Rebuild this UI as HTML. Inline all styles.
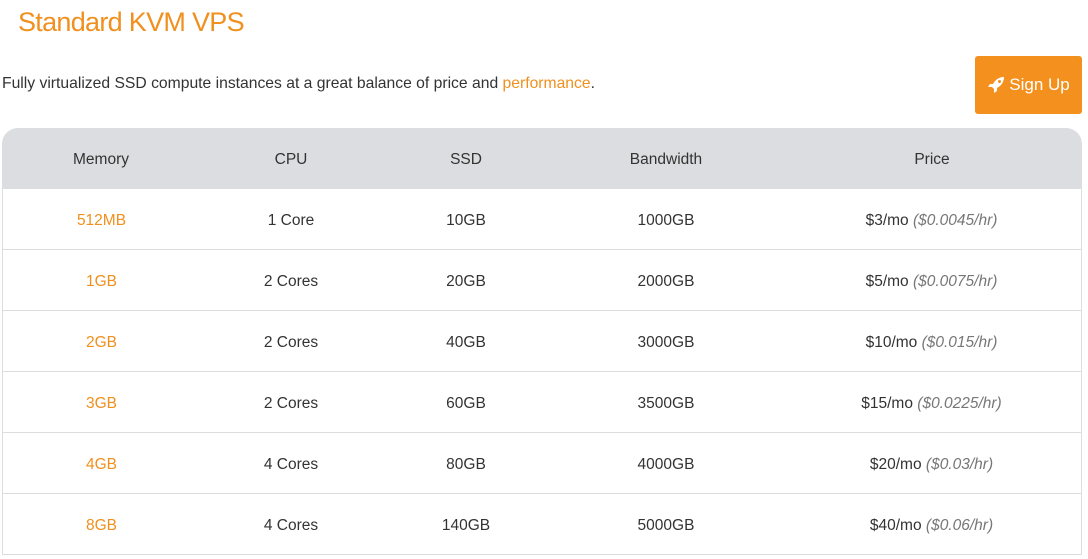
<!DOCTYPE html>
<html><head><meta charset="utf-8"><style>
body{margin:0;width:1088px;height:559px;background:#fff;font-family:"Liberation Sans",sans-serif;color:#333;position:relative;overflow:hidden}
h1{position:absolute;left:18px;top:7px;margin:0;font-weight:normal;font-size:27px;color:#f0901e;letter-spacing:-0.7px}
p{position:absolute;left:2px;top:75px;margin:0;font-size:15.7px;color:#333}
p span{color:#f0901e}
.btn{position:absolute;left:975px;top:56px;width:107px;height:58px;background:#f4901e;border-radius:3px;color:#fff;font-size:17px;display:flex;align-items:center;justify-content:center;gap:4px}
table{position:absolute;left:2px;top:128px;width:1080px;table-layout:fixed;border-collapse:separate;border-spacing:0;font-size:15.5px}
th{background:#dcdde0;height:58px;padding:3px 0 0;font-weight:normal;color:#333}
th:first-child{border-top-left-radius:16px}
th:last-child{border-top-right-radius:16px}
td{height:57px;padding:3px 0 0;text-align:center;border-bottom:1px solid #ddd}
td:first-child{border-left:1px solid #ddd;color:#f0901e}
td:last-child{border-right:1px solid #ddd}
i{color:#777}
</style></head><body>
<h1>Standard KVM VPS</h1>
<p>Fully virtualized SSD compute instances at a great balance of price and <span>performance</span>.</p>
<div class="btn"><svg width="18" height="18" viewBox="0 0 18 18"><path d="M17 1C12 1 8 4 6 8L3 8 1 11 5 11 7 13 7 17 10 15 10 12C14 10 17 6 17 1Z" fill="#fff"/><circle cx="12.5" cy="5.5" r="1.5" fill="#f4901e"/></svg>Sign Up</div>
<table>
<colgroup><col style="width:198px"><col style="width:182px"><col style="width:168px"><col style="width:232px"><col style="width:300px"></colgroup>
<tr><th>Memory</th><th>CPU</th><th>SSD</th><th>Bandwidth</th><th>Price</th></tr>
<tr><td>512MB</td><td>1 Core</td><td>10GB</td><td>1000GB</td><td>$3/mo <i>($0.0045/hr)</i></td></tr>
<tr><td>1GB</td><td>2 Cores</td><td>20GB</td><td>2000GB</td><td>$5/mo <i>($0.0075/hr)</i></td></tr>
<tr><td>2GB</td><td>2 Cores</td><td>40GB</td><td>3000GB</td><td>$10/mo <i>($0.015/hr)</i></td></tr>
<tr><td>3GB</td><td>2 Cores</td><td>60GB</td><td>3500GB</td><td>$15/mo <i>($0.0225/hr)</i></td></tr>
<tr><td>4GB</td><td>4 Cores</td><td>80GB</td><td>4000GB</td><td>$20/mo <i>($0.03/hr)</i></td></tr>
<tr><td>8GB</td><td>4 Cores</td><td>140GB</td><td>5000GB</td><td>$40/mo <i>($0.06/hr)</i></td></tr>
</table>
</body></html>
